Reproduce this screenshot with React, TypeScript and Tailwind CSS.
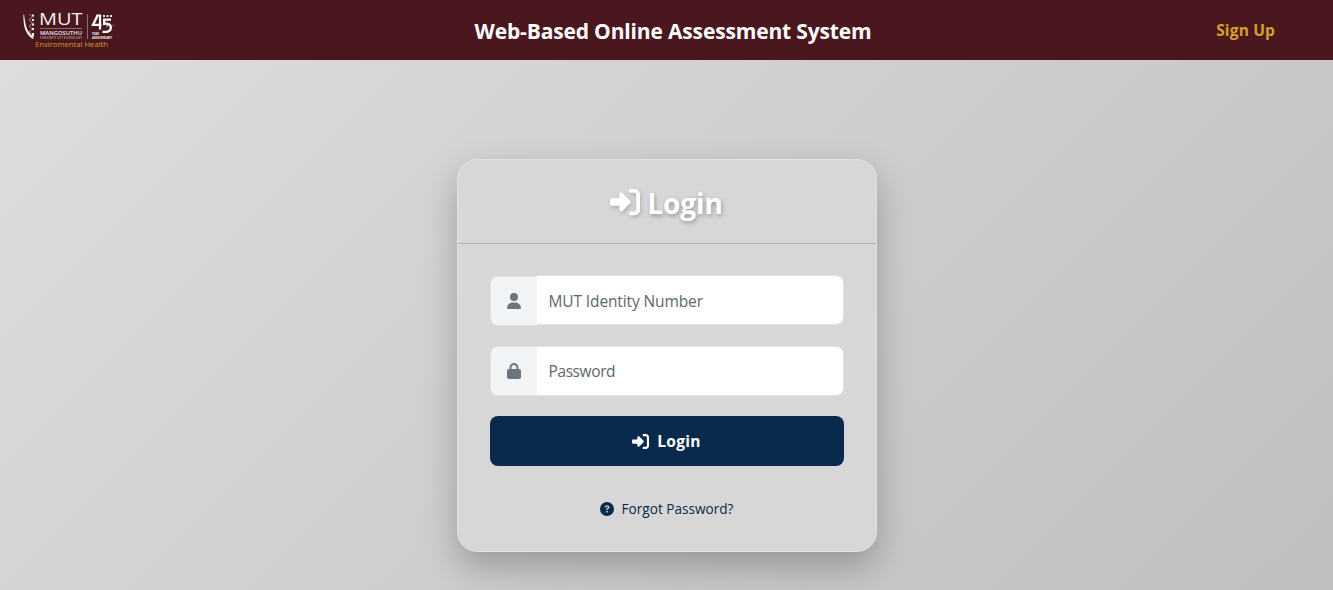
import type { ReactNode } from "react";
import { FaCircleQuestion, FaLock, FaRightToBracket, FaUser } from "react-icons/fa6";

function Logo() {
  return (
    <svg width="96" height="52" viewBox="0 -6 96 52" className="ml-[22px] mt-px overflow-visible font-['Open_Sans',sans-serif]" fill="#f3eeee" aria-label="MUT Enviromental Health">
      <path d="M1.4 3.5C1.3 15 3 23.5 11.3 28.2V25.4C5 21.5 3.3 14 2.1 3.5Z" />
      <path d="M7 3l3.5 3L7 9l3.5 3L7 15l3.5 3L7 21l3.5 2.5" fill="none" stroke="#b9a4a8" strokeWidth="0.8" />
      <path d="M10 3.5h2v2h-2zM10 8h2v2h-2zM10 12.5h2v2h-2zM10 17h2v2h-2zM10 22h2v3.5h-2z" />
      <text x="17" y="14.3" fontSize="16" fontWeight="500" textLength="43.5" lengthAdjust="spacingAndGlyphs">MUT</text>
      <path d="M18 17.2h42v.7H18z" opacity=".5" />
      <text x="18" y="24.2" fontSize="6" fontWeight="600" textLength="42" lengthAdjust="spacingAndGlyphs">MANGOSUTHU</text>
      <text x="18" y="27.6" fontSize="3" opacity=".7" textLength="42" lengthAdjust="spacingAndGlyphs">UNIVERSITY OF TECHNOLOGY</text>
      <path d="M65 3h.8v25H65z" opacity=".5" />
      <path d="M76 3.6L71 13.8H79.5M78 3.6V18.5" fill="none" stroke="#fff" strokeWidth="2.3" />
      <path d="M89 8.6H82.2V12.8C86.6 12 88.8 13.4 88.8 16.4C88.8 20 85.6 21.4 80.5 20.8" fill="none" stroke="#fff" strokeWidth="2.3" />
      <path d="M81 4h2v2h-2zM84.5 4h2v2h-2zM88 4h2v2h-2zM84 14.6l9.5-.9-9.5 1.8z" />
      <text x="70" y="24.2" fontSize="3.3" fontWeight="700" textLength="7" lengthAdjust="spacingAndGlyphs">YEAR</text>
      <text x="70" y="27.8" fontSize="3.2" fontWeight="700" textLength="20" lengthAdjust="spacingAndGlyphs">ANNIVERSARY</text>
      <text x="13" y="36.3" fontSize="7.4" fill="#d39829" textLength="73" lengthAdjust="spacingAndGlyphs">Enviromental Health</text>
    </svg>
  );
}

function Field({ icon, label, type, raised }: { icon: ReactNode; label: string; type: string; raised?: boolean }) {
  return (
    <div className="flex h-[50px] w-full">
      <span className="flex w-[47px] shrink-0 items-center justify-center rounded-l-lg border border-r-0 border-white/30 bg-[#f1f3f5] bg-clip-padding text-base text-[#6c757d]">
        {icon}
      </span>
      <input
        type={type}
        placeholder={label}
        className={`min-w-0 flex-1 rounded-r-lg border border-l-0 border-white/30 bg-white bg-clip-padding px-3 text-[15.5px] text-[#212529] outline-none placeholder:text-[#62676b] ${raised ? "relative -top-px pt-1 tracking-[-0.12px]" : "pt-0.5 tracking-[-0.4px]"}`}
      />
    </div>
  );
}

export default function App() {
  return (
    <div className="flex h-[590px] flex-col overflow-hidden bg-[linear-gradient(135deg,#dedede,#bfbfbf)] font-['Open_Sans','Noto_Sans',sans-serif]">
      <header className="grid h-[60px] shrink-0 grid-cols-[1fr_auto_1fr] items-center bg-[#4a171f]">
        <Logo />
        <h1 className="pt-[3px] pl-[13px] text-[21px] font-bold tracking-[-0.16px] whitespace-nowrap text-white">Web-Based Online Assessment System</h1>
        <a href="#signup" className="mr-[58px] justify-self-end pt-0.5 text-[15.5px] font-bold tracking-[0.15px] text-[#d4a02a]">Sign Up</a>
      </header>
      <main className="flex justify-center pt-[99px]">
        <section className="h-[393px] w-[420px] rounded-[20px] border border-[#e2e2e2] bg-[#d7d7d7] shadow-[0_15px_35px_rgba(0,0,0,0.25)]">
          <div className="flex h-[84px] items-center justify-center gap-[7px] border-b border-[#b0b0b0] text-white">
            <FaRightToBracket className="size-[30px] drop-shadow-[1px_2px_2px_rgba(0,0,0,0.2)]" />
            <h2 className="pt-0.5 text-[28px] font-bold tracking-[-0.05px] [text-shadow:1px_2px_4px_rgba(0,0,0,0.3)]">Login</h2>
          </div>
          <form className="px-8 pt-8" onSubmit={(event) => event.preventDefault()}>
            <Field icon={<FaUser />} label="MUT Identity Number" type="text" raised />
            <div className="h-5" />
            <Field icon={<FaLock />} label="Password" type="password" />
            <button className="mt-5 flex h-[50px] w-full items-center justify-center gap-2 rounded-lg bg-[#0a2a4d] text-[15.5px] font-bold tracking-[0.3px] text-white">
              <FaRightToBracket className="size-[17px]" />
              <span className="pt-0.5">Login</span>
            </button>
            <a href="#forgot" className="mt-8 flex items-center justify-center gap-2 text-[13.6px] text-[#0a2a4d]">
              <FaCircleQuestion className="size-3.5" />
              <span className="pt-px">Forgot Password?</span>
            </a>
          </form>
        </section>
      </main>
    </div>
  );
}
